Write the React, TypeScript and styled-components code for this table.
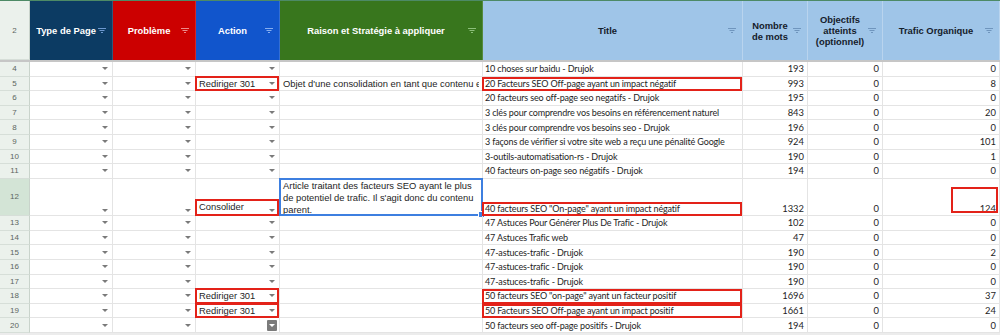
import React from 'react';
import styled, { createGlobalStyle, css } from 'styled-components';

const GlobalStyle = createGlobalStyle`
  html, body {
    margin: 0;
    padding: 0;
    background: #ececec;
  }
  body {
    font-family: 'Liberation Sans', Arial, sans-serif;
  }
`;

const COLS = '30px 83px 83px 84px 203px 260px 65px 75px 117px';

const Sheet = styled.div`
  width: 1000px;
  height: 335px;
  overflow: hidden;
  background: #ececec;
  border-top: 1px solid #4d8a66;
  box-sizing: border-box;
`;

const HeaderRow = styled.div`
  display: grid;
  grid-template-columns: ${COLS};
  grid-template-rows: 59px;
  height: 59px;
  border-bottom: 2px solid #c6c6c6;
`;

const RowNum = styled.div<{ $active?: boolean }>`
  display: flex;
  align-items: center;
  justify-content: center;
  background: ${(p) => (p.$active ? '#d3e4d6' : '#ebf1ec')};
  border-right: 1px solid #c9d3cb;
  border-bottom: 1px solid #d6ded8;
  color: #5c6660;
  font-size: 8px;
  box-sizing: border-box;
`;

const HeadCell = styled.div<{ $bg: string; $dark?: boolean }>`
  display: grid;
  grid-template-columns: 1fr 14px;
  align-items: center;
  background: ${(p) => p.$bg};
  color: ${(p) => (p.$dark ? '#15202b' : '#ffffff')};
  border-right: 1px solid ${(p) => (p.$dark ? '#b9d4ee' : 'rgba(255,255,255,0.15)')};
  font-weight: bold;
  font-size: 9.4px;
  line-height: 11px;
  text-align: center;
  box-sizing: border-box;
`;

const HeadLabel = styled.span`
  padding-left: 4px;
`;

const Filter = ({ color }: { color: string }) => (
  <svg width="8" height="6" viewBox="0 0 8 6">
    <path d="M0 0.5h8M1.5 2.5h5M3 4.5h2" stroke={color} strokeWidth="1.2" />
  </svg>
);

const Row = styled.div<{ $h: number }>`
  display: grid;
  grid-template-columns: ${COLS};
  grid-template-rows: ${(p) => p.$h}px;
  height: ${(p) => p.$h}px;
  background: #ffffff;
`;

const Cell = styled.div<{ $kind?: 'drop' | 'text' | 'title' | 'num'; $bottom?: boolean }>`
  position: relative;
  display: flex;
  align-items: ${(p) => (p.$bottom ? 'flex-end' : 'center')};
  border-right: 1px solid #e4e4e4;
  border-bottom: 1px solid #e4e4e4;
  box-sizing: border-box;
  min-width: 0;
  min-height: 0;
  color: #1e1e1e;
  white-space: nowrap;
  ${(p) =>
    p.$kind === 'drop' &&
    css`
      justify-content: space-between;
      padding: 0 4px 0 3px;
      font-size: 9.4px;
      padding-bottom: ${p.$bottom ? '3px' : '0'};
    `}
  ${(p) =>
    p.$kind === 'text' &&
    css`
      padding: 0 3px;
      font-size: 9.4px;
    `}
  ${(p) =>
    p.$kind === 'title' &&
    css`
      padding: 0 2px;
      font-family: Lato, 'Noto Sans', sans-serif;
      font-size: 9px;
      letter-spacing: -0.15px;
      padding-bottom: ${p.$bottom ? '1px' : '0'};
    `}
  ${(p) =>
    p.$kind === 'num' &&
    css`
      justify-content: flex-end;
      padding: 0 3px;
      font-family: Lato, 'Noto Sans', sans-serif;
      font-size: 9.4px;
      padding-bottom: ${p.$bottom ? '1px' : '0'};
    `}
`;

const Overflow = styled.span`
  overflow: hidden;
  white-space: nowrap;
`;

const Arrow = styled.span`
  flex: none;
  width: 0;
  height: 0;
  border-left: 3px solid transparent;
  border-right: 3px solid transparent;
  border-top: 3px solid #7a7a7a;
  margin-bottom: ${(p: { $low?: boolean }) => (p.$low ? '3px' : '0')};
`;

const DropButton = styled.span`
  flex: none;
  display: flex;
  align-items: center;
  justify-content: center;
  width: 10px;
  height: 11px;
  margin-right: -2px;
  background: #7b7b7b;
  border-radius: 1px;
  &::after {
    content: '';
    border-left: 3px solid transparent;
    border-right: 3px solid transparent;
    border-top: 3px solid #ffffff;
  }
`;

const Mark = styled.span<{ $h: number }>`
  position: absolute;
  left: -1px;
  right: 0;
  bottom: -1px;
  height: ${(p) => p.$h}px;
  border: 2px solid #e32219;
  box-sizing: border-box;
  pointer-events: none;
`;

const NumMark = styled.span`
  position: absolute;
  right: 1px;
  top: 8px;
  bottom: 2px;
  width: 47px;
  border: 2px solid #e32219;
  box-sizing: border-box;
`;

const Selected = styled.div`
  position: relative;
  min-height: 0;
  border-right: 1px solid #e4e4e4;
  border-bottom: 1px solid #e4e4e4;
  box-sizing: border-box;
  font-size: 9.4px;
  line-height: 12px;
  color: #1e1e1e;
  padding: 1px 3px 0;
  &::before {
    content: '';
    position: absolute;
    inset: -1px -1px -1px -1px;
    border: 2px solid #3d7fe0;
    pointer-events: none;
  }
  &::after {
    content: '';
    position: absolute;
    right: -3px;
    bottom: -3px;
    width: 5px;
    height: 5px;
    background: #3d7fe0;
    border: 1px solid #fff;
  }
`;

type Data = {
  n: number;
  action?: string;
  actionMark?: boolean;
  raison?: string;
  title: string;
  titleMark?: boolean;
  words: number;
  trafic: number;
};

const rows: Data[] = [
  { n: 4, title: '10 choses sur baidu - Drujok', words: 193, trafic: 0 },
  {
    n: 5,
    action: 'Rediriger 301',
    actionMark: true,
    raison: "Objet d'une consolidation en tant que contenu enfant",
    title: '20 Facteurs SEO Off-page ayant un impact négatif',
    titleMark: true,
    words: 993,
    trafic: 8,
  },
  { n: 6, title: '20 facteurs seo off-page seo negatifs - Drujok', words: 195, trafic: 0 },
  { n: 7, title: '3 clés pour comprendre vos besoins en référencement naturel', words: 843, trafic: 20 },
  { n: 8, title: '3 clés pour comprendre vos besoins seo - Drujok', words: 196, trafic: 0 },
  { n: 9, title: '3 façons de vérifier si votre site web a reçu une pénalité Google', words: 924, trafic: 101 },
  { n: 10, title: '3-outils-automatisation-rs - Drujok', words: 190, trafic: 1 },
  { n: 11, title: '40 facteurs on-page seo négatifs - Drujok', words: 194, trafic: 0 },
  { n: 12, action: 'Consolider', actionMark: true, title: '40 facteurs SEO "On-page" ayant un impact négatif', titleMark: true, words: 1332, trafic: 124 },
  { n: 13, title: '47 Astuces Pour Générer Plus De Trafic - Drujok', words: 102, trafic: 0 },
  { n: 14, title: '47 Astuces Trafic web', words: 47, trafic: 0 },
  { n: 15, title: '47-astuces-trafic - Drujok', words: 190, trafic: 2 },
  { n: 16, title: '47-astuces-trafic - Drujok', words: 190, trafic: 0 },
  { n: 17, title: '47-astuces-trafic - Drujok', words: 190, trafic: 0 },
  { n: 18, action: 'Rediriger 301', actionMark: true, title: '50 facteurs SEO "on-page" ayant un facteur positif', titleMark: true, words: 1696, trafic: 37 },
  { n: 19, action: 'Rediriger 301', actionMark: true, title: '50 Facteurs SEO Off-page ayant un impact positif', titleMark: true, words: 1661, trafic: 24 },
  { n: 20, title: '50 facteurs seo off-page positifs - Drujok', words: 194, trafic: 0 },
];

const headers = [
  { label: 'Type de Page', bg: '#0c3b63', icon: '#6d98cf' },
  { label: 'Problème', bg: '#cc0000', icon: '#ec8a8a' },
  { label: 'Action', bg: '#1155cc', icon: '#86aef0' },
  { label: 'Raison et Stratégie à appliquer', bg: '#38761d', icon: '#8cc07a' },
  { label: 'Title', bg: '#9fc5e8', icon: '#6f95bd', dark: true },
  { label: 'Nombre\nde mots', bg: '#9fc5e8', icon: '#6f95bd', dark: true },
  { label: 'Objectifs\natteints\n(optionnel)', bg: '#9fc5e8', icon: '#6f95bd', dark: true },
  { label: 'Trafic Organique', bg: '#9fc5e8', icon: '#6f95bd', dark: true },
];

const App = () => (
  <>
    <GlobalStyle />
    <Sheet>
      <HeaderRow>
        <RowNum>2</RowNum>
        {headers.map((h) => (
          <HeadCell key={h.label} $bg={h.bg} $dark={h.dark}>
            <HeadLabel>
              {h.label.split('\n').map((l, i) => (
                <React.Fragment key={i}>
                  {i > 0 && <br />}
                  {l}
                </React.Fragment>
              ))}
            </HeadLabel>
            <Filter color={h.icon} />
          </HeadCell>
        ))}
      </HeaderRow>
      {rows.map((r) => {
        const tall = r.n === 12;
        return (
          <Row key={r.n} $h={tall ? 37.4 : 14.6}>
            <RowNum $active={tall}>{r.n}</RowNum>
            <Cell $kind="drop" $bottom={tall}>
              <span />
              <Arrow />
            </Cell>
            <Cell $kind="drop" $bottom={tall}>
              <span />
              <Arrow />
            </Cell>
            <Cell $kind="drop" $bottom={tall}>
              <span>{r.action}</span>
              {r.n === 20 ? <DropButton /> : <Arrow />}
              {r.actionMark && <Mark $h={tall ? 17 : 15.6} />}
            </Cell>
            {tall ? (
              <Selected>
                Article traitant des facteurs SEO ayant le plus
                <br />
                de potentiel de trafic. Il s'agit donc du contenu
                <br />
                parent.
              </Selected>
            ) : (
              <Cell $kind="text">
                <Overflow>{r.raison}</Overflow>
              </Cell>
            )}
            <Cell $kind="title" $bottom={tall}>
              {r.title}
              {r.titleMark && <Mark $h={14.5} />}
            </Cell>
            <Cell $kind="num" $bottom={tall}>
              {r.words}
            </Cell>
            <Cell $kind="num" $bottom={tall}>
              0
            </Cell>
            <Cell $kind="num" $bottom={tall}>
              {r.trafic}
              {tall && <NumMark />}
            </Cell>
          </Row>
        );
      })}
    </Sheet>
  </>
);

export default App;
